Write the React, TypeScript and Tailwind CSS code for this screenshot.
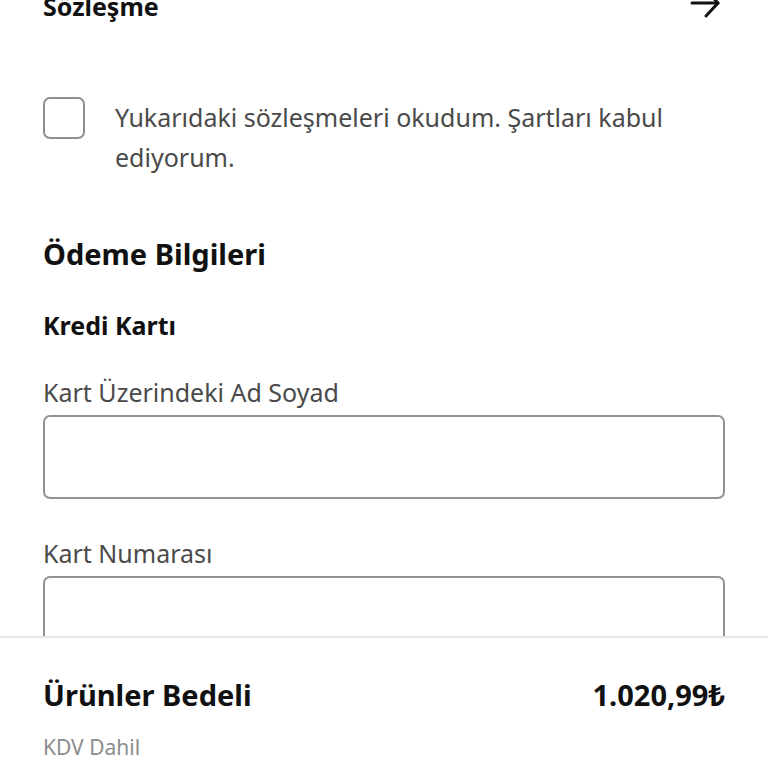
import React from "react";

export default function App() {
  return (
    <div
      className="relative h-[768px] w-[768px] overflow-hidden bg-white text-[#111]"
      style={{ fontFamily: '"Noto Sans", "Open Sans", sans-serif' }}
    >
      <div className="flex flex-col px-[43px]">
        <div className="mt-[-10px] flex h-[32px] items-center justify-between">
          <span className="text-[25px] font-bold leading-[32px]">Sözleşme</span>
          <svg
            width="32"
            height="32"
            viewBox="0 0 32 32"
            className="mr-[4px] mt-[-6px]"
            fill="none"
            stroke="#111"
            strokeWidth="3"
            strokeLinecap="round"
            strokeLinejoin="round"
          >
            <path d="M3 16 H29" />
            <path d="M17 3 L29 16 L17 29" />
          </svg>
        </div>

        <div className="mt-[75px] flex items-start gap-[30px]">
          <div className="h-[42px] w-[42px] shrink-0 rounded-[7px] border-2 border-[#8e8e8e]" />
          <p className="text-[25px] leading-[40px] text-[#4a4a4a]">
            Yukarıdaki sözleşmeleri okudum. Şartları kabul ediyorum.
          </p>
        </div>

        <h2 className="mt-[59px] text-[29px] font-bold leading-[36px]">Ödeme Bilgileri</h2>

        <h3 className="mt-[37px] text-[25px] font-bold leading-[32px]">Kredi Kartı</h3>

        <label className="mt-[34px] text-[25px] leading-[34px] text-[#4a4a4a]">
          Kart Üzerindeki Ad Soyad
        </label>
        <div className="mt-[6px] h-[84px] w-full rounded-[7px] border-2 border-[#929292]" />

        <label className="mt-[37px] text-[25px] leading-[34px] text-[#4a4a4a]">Kart Numarası</label>
        <div className="mt-[6px] h-[84px] w-full rounded-[7px] border-2 border-[#929292]" />
      </div>

      <div className="absolute bottom-0 left-0 right-0 h-[132px] border-t-2 border-[#e6e6e6] bg-white px-[43px] pt-[40px]">
        <div className="flex h-[34px] items-center justify-between">
          <span className="text-[29px] font-bold leading-[34px]">Ürünler Bedeli</span>
          <span className="text-[29px] font-bold leading-[34px]">1.020,99₺</span>
        </div>
        <div className="mt-[22px] text-[21px] leading-[26px] text-[#8c8c8c]">KDV Dahil</div>
      </div>
    </div>
  );
}
